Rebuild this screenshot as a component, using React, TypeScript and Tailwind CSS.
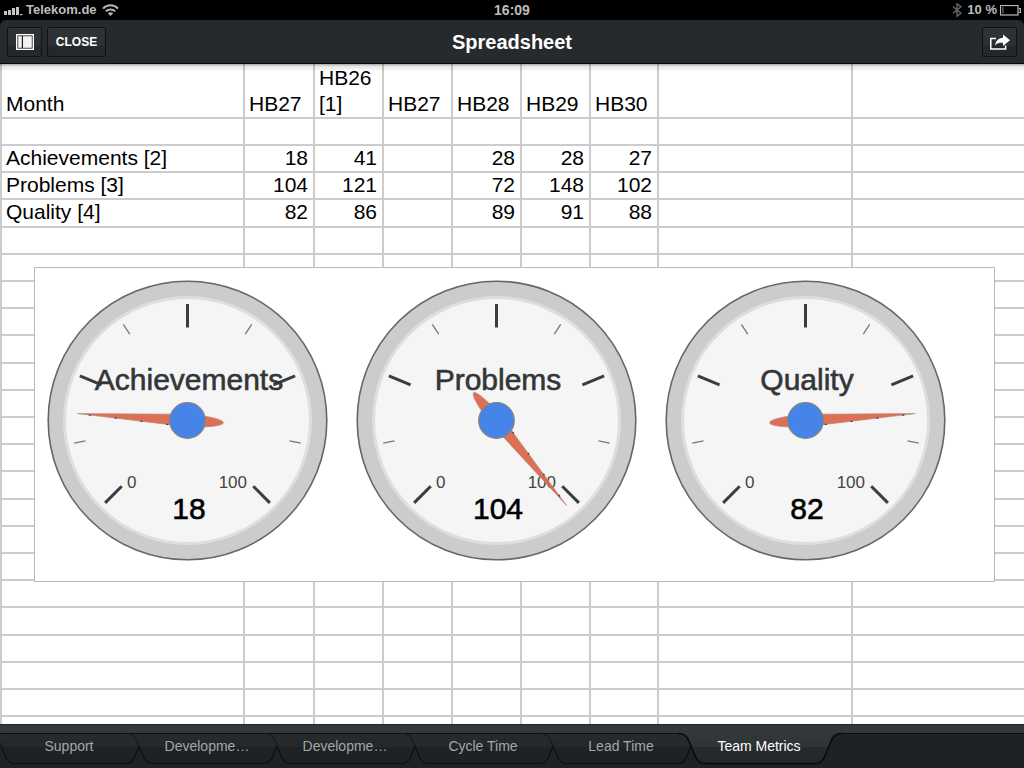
import React from "react";

type Row = { label: string; values: (number | null)[] };
type GaugeInfo = { label: string; value: number; angle: number; speckle: -1 | 1 };

const headings = ["HB27", "HB26 [1]", "HB27", "HB28", "HB29", "HB30"];

const rows: Row[] = [
  { label: "", values: [] },
  { label: "Achievements [2]", values: [18, 41, null, 28, 28, 27] },
  { label: "Problems [3]", values: [104, 121, null, 72, 148, 102] },
  { label: "Quality [4]", values: [82, 86, null, 89, 91, 88] },
];

const blankRows = 20;

const gauges: GaugeInfo[] = [
  { label: "Achievements", value: 18, angle: -86.4, speckle: -1 },
  { label: "Problems", value: 104, angle: 140.5, speckle: -1 },
  { label: "Quality", value: 82, angle: 86.4, speckle: 1 },
];

const tabs = ["Support", "Developme…", "Developme…", "Cycle Time", "Lead Time", "Team Metrics"];

const majorTicks = [-135, -67.5, 0, 67.5, 135];
const minorTicks = [-101.25, -33.75, 33.75, 101.25];

function Gauge({ label, value, angle, speckle }: GaugeInfo) {
  return (
    <svg
      width="281"
      height="281"
      viewBox="0 0 281 281"
      role="img"
      aria-label={`${label}: ${value}`}
      className="shrink-0 font-['Liberation_Sans',Arial,sans-serif]"
    >
      <circle cx="140.5" cy="140.5" r="139.3" fill="#ccc" stroke="#666" strokeWidth="1.6" />
      <circle cx="140.5" cy="140.5" r="123" fill="#f5f5f5" stroke="#dedede" strokeWidth="3" />
      <g transform="translate(140.5 140.5)">
        {minorTicks.map((a) => (
          <line key={a} y1="-104" y2="-115.5" stroke="#777" strokeWidth="1.3" transform={`rotate(${a})`} />
        ))}
        {majorTicks.map((a) => (
          <line key={a} y1="-93" y2="-116.5" stroke="#3a3c3e" strokeWidth="3" transform={`rotate(${a})`} />
        ))}
      </g>
      <text x="142" y="110" textAnchor="middle" fontSize="30" fill="#333638" stroke="#333638" strokeWidth="0.6">
        {label}
      </text>
      <text x="80" y="208" fontSize="17" fill="#444">
        0
      </text>
      <text x="200" y="208" textAnchor="end" fontSize="17" fill="#444">
        100
      </text>
      <text x="142" y="239" textAnchor="middle" fontSize="30" fill="#000" stroke="#000" strokeWidth="0.6">
        {value}
      </text>
      <g transform={`translate(140.5 140.5) rotate(${angle})`}>
        <path
          d="M0 -110 L5.4 -15 L5.2 18 C4.4 27 2.4 36 0 36 C-2.4 36 -4.4 27 -5.2 18 L-5.4 -15 Z"
          fill="#db694d"
          fillOpacity="0.96"
          stroke="#b58c80"
          strokeWidth="0.7"
        />
        <path
          d={speckle < 0 ? "M-5.4 -15 L-0.6 -100" : "M5.4 -15 L0.6 -100"}
          fill="none"
          stroke="#2a2a2a"
          strokeWidth="1"
          strokeDasharray="2 24"
          strokeDashoffset="-4"
        />
      </g>
      <circle cx="140.5" cy="140.5" r="17.8" fill="#4684e8" stroke="#85857d" strokeWidth="1.2" />
    </svg>
  );
}

function StatusBar() {
  return (
    <div className="grid h-5 shrink-0 grid-cols-3 items-center bg-black text-[13px] leading-5 font-bold text-[#bdbdbd]">
      <div className="flex items-center gap-[3px] pl-1">
        <svg width="19" height="12" viewBox="0 0 19 12" fill="#c4c4c4" aria-hidden="true">
          <rect x="0" y="7" width="3" height="4" />
          <rect x="4" y="6" width="3" height="5" />
          <rect x="8" y="4" width="3" height="7" />
          <rect x="12" y="3" width="3" height="8" />
          <rect x="16" y="10" width="2.5" height="1.2" />
        </svg>
        <span>Telekom.de</span>
        <svg width="17" height="12" viewBox="0 0 17 12" fill="none" stroke="#b4b4b4" strokeWidth="2" className="ml-0.5" aria-hidden="true">
          <path d="M1 4.6 C5 0.2 12 0.2 16 4.6" />
          <path d="M3.8 7.4 C6.5 4.7 10.5 4.7 13.2 7.4" />
          <path d="M8.5 12 L5.8 9.3 C7.2 8 9.8 8 11.2 9.3 Z" fill="#b4b4b4" stroke="none" />
        </svg>
      </div>
      <div className="text-center text-sm leading-5">16:09</div>
      <div className="flex items-center justify-end gap-[3px] pr-[3px]">
        <svg width="10" height="14" viewBox="0 0 10 14" fill="none" stroke="#6c6c6c" strokeWidth="1.3" className="mr-0.5" aria-hidden="true">
          <path d="M1 3.8 L9 10.2 L5 13.3 V0.7 L9 3.8 L1 10.2" />
        </svg>
        <span>10 %</span>
        <svg width="21" height="11" viewBox="0 0 21 11" fill="none" stroke="#b9b9b9" aria-hidden="true">
          <rect x="0.5" y="0.5" width="17.5" height="9.5" strokeWidth="1.2" />
          <path d="M18.5 3.5 H20.3 V7.5 H18.5" strokeWidth="1.2" />
          <rect x="2" y="2" width="1.6" height="6.5" fill="#555" stroke="none" />
        </svg>
      </div>
    </div>
  );
}

const barButton =
  "flex h-[30px] items-center justify-center rounded-xs border border-[#0f1214] bg-linear-to-b from-[#303437] from-0% via-[#2b2f32] via-65% to-[#24282a] to-65% text-xs font-bold text-white";

function TitleBar() {
  return (
    <div className="bg-black">
      <header className="grid h-11 grid-cols-[1fr_auto_1fr] items-center rounded-t-md border-b border-[#07090a] bg-[#262a2d] px-[7px]">
        <div className="flex gap-[5px]">
          <button type="button" aria-label="Show sidebar" className={`w-[35px] ${barButton}`}>
            <svg width="18" height="16" viewBox="0 0 18 16" aria-hidden="true">
              <rect x="0.7" y="0.7" width="16.6" height="14.6" fill="#17191b" stroke="#fff" strokeWidth="1.4" />
              <rect x="2.2" y="2.2" width="3.6" height="11.6" fill="#f2f2f2" />
              <rect x="7" y="2.2" width="8.8" height="11.6" fill="#f2f2f2" />
            </svg>
          </button>
          <button type="button" className={`w-[59px] ${barButton}`}>
            CLOSE
          </button>
        </div>
        <h1 className="text-xl leading-6 font-bold text-white">Spreadsheet</h1>
        <div className="flex justify-end">
          <button type="button" aria-label="Share" className={`w-[35px] ${barButton}`}>
            <svg width="20" height="16" viewBox="0 0 20 16" aria-hidden="true">
              <path d="M6 4.5 H0.8 V15 H15.6 V11.5" fill="none" stroke="#fff" strokeWidth="1.5" />
              <path d="M13 0.5 L20 6.2 L13 12 V8.8 C9.5 8.6 7.2 9 5.2 11.4 C5.6 6.8 8.6 4 13 3.7 Z" fill="#fff" />
            </svg>
          </button>
        </div>
      </header>
    </div>
  );
}

function Sheet() {
  const line = "border-r-2 border-b-2 border-[#ccc]";
  const all: Row[] = [...rows, ...Array.from({ length: blankRows }, () => ({ label: "", values: [] }))];
  return (
    <main className="relative min-h-0 flex-1 overflow-auto bg-white [scrollbar-width:none]">
      <table className="w-full table-fixed border-separate border-spacing-0 text-[21px] leading-6 text-black">
        <colgroup>
          <col className="w-[245px]" />
          <col className="w-[70px]" />
          <col className="w-[69px]" />
          <col className="w-[69px]" />
          <col className="w-[69px]" />
          <col className="w-[69px]" />
          <col className="w-[68px]" />
          <col className="w-[194px]" />
          <col />
        </colgroup>
        <thead>
          <tr className="h-[55px] text-left align-bottom">
            <th scope="col" className={`border-l-2 pl-1 font-normal leading-[26px] ${line}`}>
              Month
            </th>
            {headings.map((h, i) => (
              <th key={i} scope="col" className={`pl-1 font-normal leading-[26px] ${line}`}>
                {h}
              </th>
            ))}
            <td className={line} />
            <td className="border-b-2 border-[#ccc]" />
          </tr>
        </thead>
        <tbody>
          {all.map((row, r) => (
            <tr key={r} className={`align-top ${r % 5 === 3 ? "h-7" : "h-[27px]"}`}>
              <th scope="row" className={`border-l-2 pl-1 text-left font-normal ${line}`}>
                {row.label}
              </th>
              {headings.map((_, i) => (
                <td key={i} className={`pr-[5px] text-right ${line}`}>
                  {row.values[i] ?? ""}
                </td>
              ))}
              <td className={line} />
              <td className="border-b-2 border-[#ccc]" />
            </tr>
          ))}
        </tbody>
      </table>
      <div className="absolute top-[203px] left-[34px] flex w-[961px] gap-7 border border-[#b8b8b8] bg-white px-3 pt-3 pb-5">
        {gauges.map((g) => (
          <Gauge key={g.label} {...g} />
        ))}
      </div>
      <div className="pointer-events-none absolute inset-x-0 top-0 h-2 bg-linear-to-b from-black/35 via-black/10 via-30% to-transparent" />
    </main>
  );
}

function TabShape({ active }: { active: boolean }) {
  const lower = "M0 13 C4 22 5 30.5 14 30.5 H125 C133 30.5 134 22 138 13";
  return (
    <svg
      width="166"
      height="36"
      viewBox="-14 -1 166 36"
      className="pointer-events-none absolute -top-px -left-[14px]"
      aria-hidden="true"
    >
      <defs>
        <linearGradient id={active ? "tab-on" : "tab-off"} gradientUnits="userSpaceOnUse" x1="0" y1="0" x2="0" y2="31">
          <stop offset="0" stopColor={active ? "#33383b" : "#272b2e"} />
          <stop offset="0.46" stopColor={active ? "#2e3336" : "#24282b"} />
          <stop offset="0.46" stopColor={active ? "#272b2e" : "#1e2224"} />
          <stop offset="1" stopColor={active ? "#24282b" : "#1e2224"} />
        </linearGradient>
      </defs>
      {active ? (
        <>
          <path
            d="M-13 0.5 C-4 0.5 -3 6 0 13 C4 22 5 30.5 14 30.5 H125 C133 30.5 134 22 138 13 C141 6 142 0.5 151 0.5 V-1 H-13 Z"
            fill="url(#tab-on)"
          />
          <path
            d="M-13 0.5 C-4 0.5 -3 6 0 13 C4 22 5 30.5 14 30.5 H125 C133 30.5 134 22 138 13 C141 6 142 0.5 151 0.5"
            fill="none"
            stroke="#080b0c"
            strokeWidth="1.6"
          />
        </>
      ) : (
        <>
          <path d={`${lower} V1 H-8 C-3 3 -2 8 0 13 Z`} fill="url(#tab-off)" />
          <path d="M-13 0.5 C-4 0.5 -3 6 0 13" fill="none" stroke="#15191a" strokeWidth="1.2" />
          <path d={lower} fill="none" stroke="#0f1314" strokeWidth="1.6" />
        </>
      )}
    </svg>
  );
}

function TabBar() {
  return (
    <nav aria-label="Sheets" className="shrink-0 overflow-hidden bg-[#1e2224]">
      <div className="h-[9px] border-t border-[#22272a] bg-[#33383b]" />
      <div className="flex h-[35px] border-t border-[#0c0f10] pl-px">
        {tabs.map((t, i) => {
          const active = i === tabs.length - 1;
          return (
            <button
              key={i}
              type="button"
              aria-current={active ? "page" : undefined}
              className={`relative -mt-px h-8 w-[138px] shrink-0 text-sm leading-5 ${active ? "text-white" : "text-[#a3a6a8]"}`}
            >
              <TabShape active={active} />
              <span className="relative block pr-0.5 pb-1.5">{t}</span>
            </button>
          );
        })}
      </div>
    </nav>
  );
}

export default function App() {
  return (
    <div className="flex h-screen flex-col overflow-hidden bg-black font-['Liberation_Sans',Arial,sans-serif]">
      <StatusBar />
      <TitleBar />
      <Sheet />
      <TabBar />
    </div>
  );
}
